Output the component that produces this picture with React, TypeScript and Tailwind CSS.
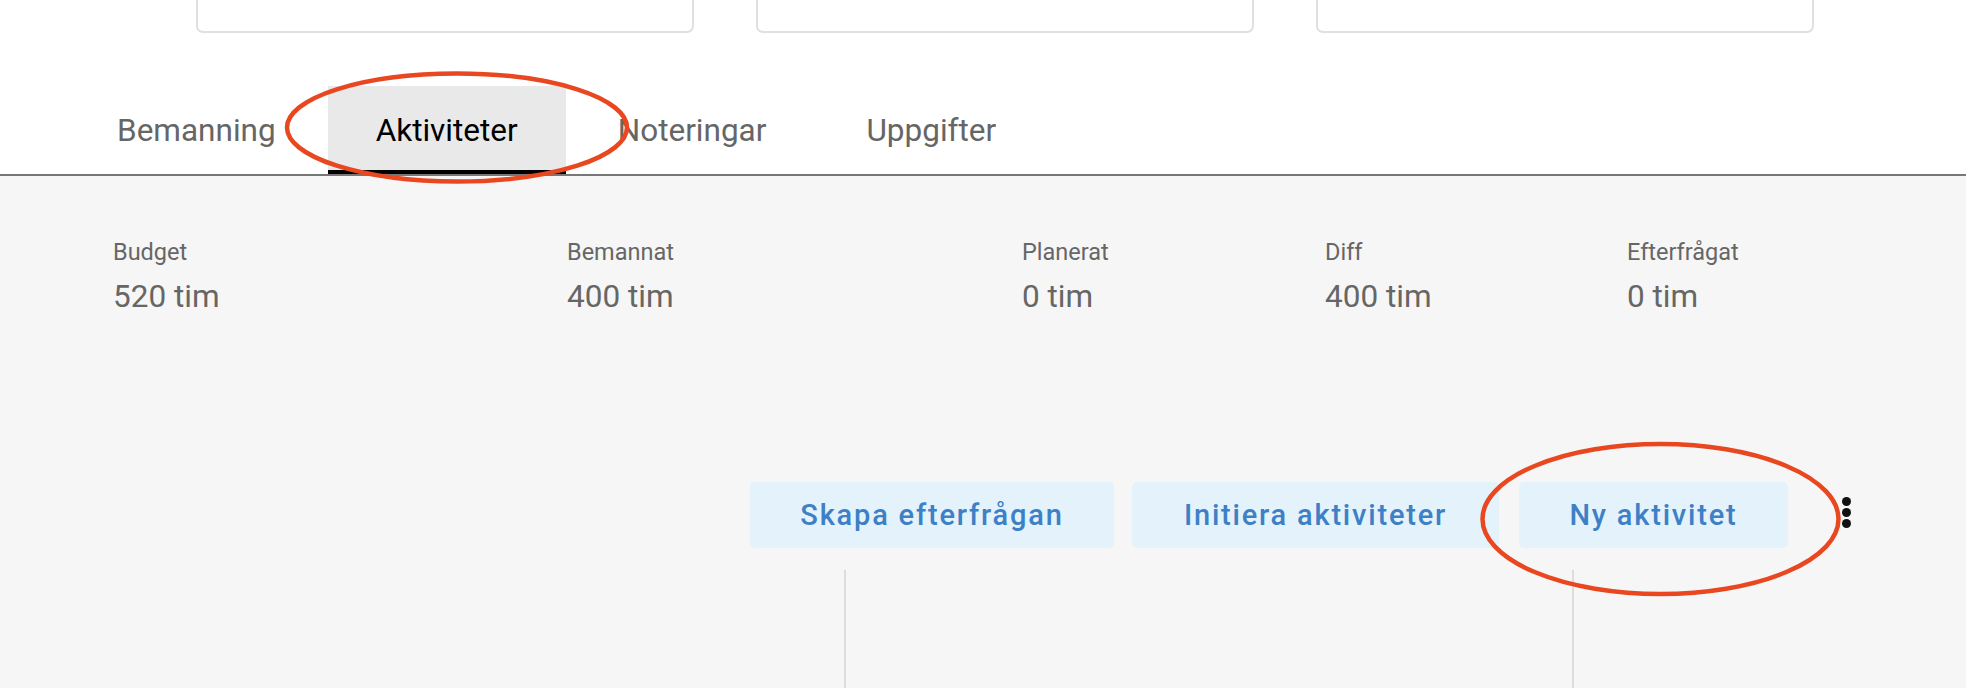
import React from "react";

const tabs = ["Bemanning", "Aktiviteter", "Noteringar", "Uppgifter"];

const stats = [
  { label: "Budget", value: "520 tim" },
  { label: "Bemannat", value: "400 tim" },
  { label: "Planerat", value: "0 tim" },
  { label: "Diff", value: "400 tim" },
  { label: "Efterfrågat", value: "0 tim" },
];

const actions = [
  { label: "Skapa efterfrågan", className: "w-[364px]" },
  { label: "Initiera aktiviteter", className: "ml-[18px] w-[367px]" },
  { label: "Ny aktivitet", className: "ml-[20px] w-[269px]" },
];

export default function App() {
  const active = "Aktiviteter";

  return (
    <div className="relative min-h-[688px] w-[1966px] overflow-hidden bg-white font-['Roboto',sans-serif]">
      {/* Cards cut off at the top */}
      <div className="flex gap-[62px] pl-[196px]">
        {[0, 1, 2].map((i) => (
          <div
            key={i}
            className="h-[33px] w-[498px] rounded-b-[7px] border-2 border-t-0 border-[#e0e0e0] bg-white"
          />
        ))}
      </div>

      {/* Tabs */}
      <div className="mt-[53px] flex gap-[4px] border-b-2 border-[#777777] pl-[69px]">
        {tabs.map((tab) => (
          <button
            key={tab}
            className={
              tab === active
                ? "flex h-[88px] items-center border-b-4 border-black bg-[#e9e9e9] px-[48px] pt-[6px] text-[31.5px] leading-[36px] text-black"
                : "flex h-[88px] items-center border-b-4 border-transparent px-[48px] pt-[6px] text-[31.5px] leading-[36px] text-[#666666]"
            }
          >
            {tab}
          </button>
        ))}
      </div>

      <div className="bg-[#f6f6f6]">
        {/* Summary */}
        <div className="grid grid-cols-[454px_455px_303px_302px_1fr] pl-[113px] pt-[62px]">
          {stats.map((s) => (
            <div key={s.label} className="text-[#666666]">
              <div className="text-[23.5px] leading-[28px]">{s.label}</div>
              <div className="mt-[13px] text-[31.5px] leading-[36px]">{s.value}</div>
            </div>
          ))}
        </div>

        {/* Actions */}
        <div className="mt-[167px] flex items-center justify-end pr-[115px]">
          {actions.map((a) => (
            <button
              key={a.label}
              className={`flex h-[66px] items-center justify-center rounded-[5px] bg-[#e4f2fc] text-[29px] font-medium leading-[34px] tracking-[1.8px] text-[#3d80c6] ${a.className}`}
            >
              {a.label}
            </button>
          ))}
          <div className="mb-[6px] ml-[54px] flex flex-col gap-[2px]">
            <span className="h-[9px] w-[9px] rounded-full bg-[#111111]" />
            <span className="h-[9px] w-[9px] rounded-full bg-[#111111]" />
            <span className="h-[9px] w-[9px] rounded-full bg-[#111111]" />
          </div>
        </div>

        {/* Columns below */}
        <div className="mt-[22px] flex h-[118px]">
          <div className="w-[844px]" />
          <div className="w-[728px] border-l-2 border-[#dddddd]" />
          <div className="flex-1 border-l-2 border-[#dddddd]" />
        </div>
      </div>

      {/* Annotation rings */}
      <svg
        className="pointer-events-none absolute left-0 top-0"
        width="1966"
        height="688"
        viewBox="0 0 1966 688"
      >
        <ellipse cx="457" cy="127.5" rx="170" ry="54" fill="none" stroke="#e8471f" strokeWidth="4.5" />
        <ellipse cx="1660.5" cy="519" rx="178" ry="75" fill="none" stroke="#e8471f" strokeWidth="4.5" />
      </svg>
    </div>
  );
}
